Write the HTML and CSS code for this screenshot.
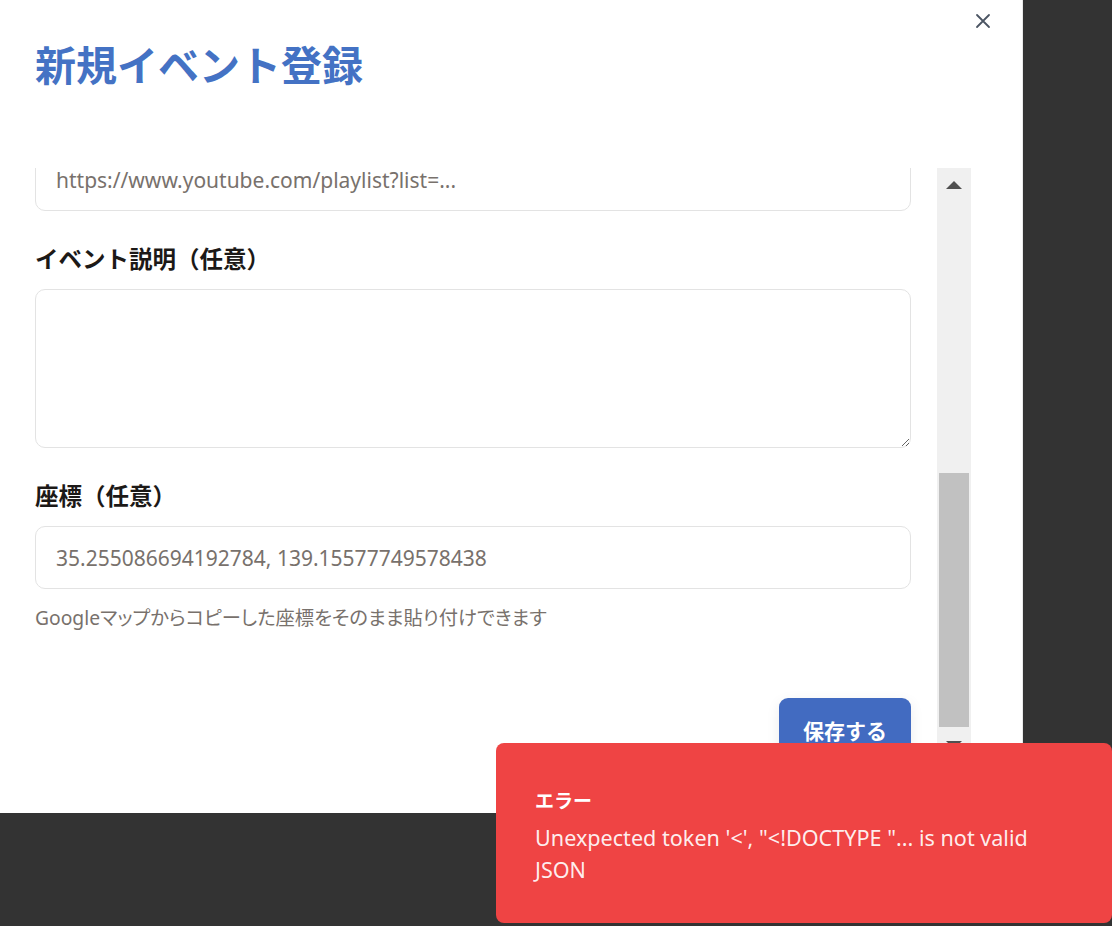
FILE: index.html
```html
<!DOCTYPE html>
<html lang="ja">
<head>
<meta charset="utf-8">
<title>新規イベント登録</title>
<link rel="stylesheet" href="styles.css">
</head>
<body>
<div class="modal">
  <button class="close" aria-label="閉じる">
    <svg viewBox="0 0 16 16" width="16" height="16"><path d="M2 2 L14 14 M14 2 L2 14" stroke="#4b5563" stroke-width="1.8" stroke-linecap="round" fill="none"/></svg>
  </button>
  <header class="header">
    <h1 class="title">新規イベント登録</h1>
  </header>
  <div class="scroll">
    <div class="content">
      <input class="input first" type="text" placeholder="https://www.youtube.com/playlist?list=...">
      <div class="field">
        <label class="label">イベント説明（任意）</label>
        <textarea class="textarea"></textarea>
      </div>
      <div class="field">
        <label class="label">座標（任意）</label>
        <input class="input" type="text" placeholder="35.255086694192784, 139.15577749578438">
        <p class="help">Googleマップからコピーした座標をそのまま貼り付けできます</p>
      </div>
      <div class="actions">
        <button class="save">保存する</button>
      </div>
    </div>
    <div class="scrollbar">
      <div class="sb-btn"><span class="tri up"></span></div>
      <div class="sb-track"><div class="sb-thumb"></div></div>
      <div class="sb-btn"><span class="tri down"></span></div>
    </div>
  </div>
</div>
<div class="toast">
  <div class="toast-title">エラー</div>
  <div class="toast-msg">Unexpected token '&lt;', "&lt;!DOCTYPE "... is not valid JSON</div>
</div>
</body>
</html>
```
FILE: styles.css
```css
* { box-sizing: border-box; }
html, body { margin: 0; padding: 0; }
body {
  background: #333333;
  width: 1112px;
  height: 926px;
  overflow: hidden;
  font-family: "Noto Sans", "Noto Sans CJK JP", sans-serif;
}
.modal {
  position: relative;
  width: 1022px;
  height: 813px;
  background: #ffffff;
  display: flex;
  flex-direction: column;
  box-shadow: 1px 0 0 #e8e8e8;
}
.close {
  position: absolute;
  left: 975px;
  top: 13px;
  width: 16px;
  height: 16px;
  padding: 0;
  border: 0;
  background: transparent;
  display: flex;
}
.header {
  height: 168px;
  padding: 33px 0 0 35px;
  flex: none;
}
.title {
  margin: 0;
  font-family: "Noto Sans CJK JP", sans-serif;
  font-size: 41px;
  line-height: 60px;
  font-weight: 700;
  color: #4472c4;
}
.scroll {
  width: 971px;
  height: 594px;
  flex: none;
  display: flex;
}
.content {
  flex: 1;
  overflow: hidden;
  padding: 0 26px 0 35px;
}
.input {
  display: block;
  width: 100%;
  height: 63px;
  border: 1px solid #e3e3e3;
  border-radius: 10px;
  padding: 0 20px;
  font-family: "Noto Sans", "Noto Sans CJK JP", sans-serif;
  font-size: 21px;
  color: #1c1917;
  background: #fff;
  outline: none;
}
.input::placeholder, .textarea::placeholder { color: #78716c; }
.input.first { margin-top: -20px; }
.field { margin-top: 31px; }
.label {
  display: block;
  font-family: "Noto Sans CJK JP", sans-serif;
  font-size: 23.5px;
  line-height: 32px;
  font-weight: 700;
  color: #1c1917;
  margin-bottom: 15px;
}
.textarea {
  display: block;
  width: 100%;
  height: 159px;
  border: 1px solid #e3e3e3;
  border-radius: 10px;
  padding: 14px 20px;
  font-family: "Noto Sans", "Noto Sans CJK JP", sans-serif;
  font-size: 20px;
  outline: none;
  resize: both;
}
.help {
  margin: 15px 0 0;
  font-family: "Noto Sans", "Noto Sans CJK JP", sans-serif;
  font-size: 19.3px;
  line-height: 28px;
  color: #78716c;
  font-feature-settings: "palt";
}
.actions {
  display: flex;
  justify-content: flex-end;
  margin-top: 66px;
}
.save {
  width: 132px;
  height: 64px;
  border: 0;
  border-radius: 9px;
  background: #426bc1;
  color: #ffffff;
  font-family: "Noto Sans CJK JP", sans-serif;
  font-size: 21px;
  font-weight: 700;
  box-shadow: 0 4px 14px rgba(0, 0, 0, 0.08);
}
.scrollbar {
  width: 34px;
  flex: none;
  background: #f0f0f0;
  display: flex;
  flex-direction: column;
}
.sb-btn {
  height: 34px;
  flex: none;
  display: flex;
  align-items: center;
  justify-content: center;
}
.tri {
  width: 0;
  height: 0;
  border-left: 8px solid transparent;
  border-right: 8px solid transparent;
}
.tri.up { border-bottom: 8px solid #505050; }
.tri.down { border-top: 8px solid #505050; }
.sb-track {
  flex: 1;
  display: flex;
  flex-direction: column;
  justify-content: flex-end;
  padding: 0 2px 1px;
}
.sb-thumb {
  height: 254px;
  background: #c1c1c1;
}
.toast {
  position: fixed;
  right: 0;
  bottom: 3px;
  width: 616px;
  height: 180px;
  background: #ef4444;
  border-radius: 8px;
  padding: 43px 48px 0 39px;
  color: #ffffff;
}
.toast-title {
  font-family: "Noto Sans CJK JP", sans-serif;
  font-size: 19px;
  line-height: 28px;
  font-weight: 700;
  margin-bottom: 8px;
}
.toast-msg {
  font-family: "Noto Sans", "Noto Sans CJK JP", sans-serif;
  font-size: 21.6px;
  line-height: 32px;
  color: rgba(255, 255, 255, 0.92);
}
```
